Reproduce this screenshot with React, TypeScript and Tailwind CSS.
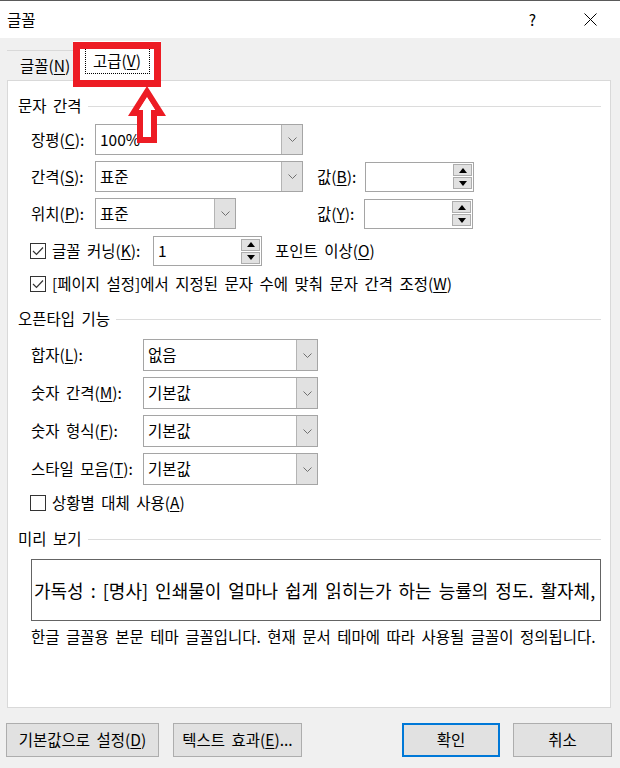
import React from "react";

const Mn = ({ k }: { k: string }) => (
  <span className="underline decoration-1 underline-offset-[2px]">{k}</span>
);

const Chevron = () => (
  <svg width="9" height="5" viewBox="0 0 9 5">
    <polyline points="0.5,0.5 4.5,4.5 8.5,0.5" fill="none" stroke="#707070" strokeWidth="1" />
  </svg>
);

const Combo = ({ value, className }: { value: string; className: string }) => (
  <div className={`flex h-full border border-[#a5a5a5] bg-white ${className}`}>
    <span className="flex flex-1 items-center pl-[4px]">{value}</span>
    <span className="flex w-[21px] items-center justify-center border-l border-[#b4b4b4] bg-[#e1e1e1]">
      <Chevron />
    </span>
  </div>
);

const Tri = ({ up }: { up?: boolean }) => (
  <svg width="8" height="5" viewBox="0 0 8 5">
    <polygon points={up ? "0,5 8,5 4,0" : "0,0 8,0 4,5"} fill="#000" />
  </svg>
);

const Spin = ({ value = "", className }: { value?: string; className: string }) => (
  <div className={`flex items-center border border-[#a5a5a5] bg-white ${className}`}>
    <span className="flex-1 pl-[4px]">{value}</span>
    <div className="mr-[1px] flex flex-col gap-[1px]">
      <span className="flex h-[12px] w-[19px] items-center justify-center border border-[#adadad] bg-[#e1e1e1]">
        <Tri up />
      </span>
      <span className="flex h-[12px] w-[19px] items-center justify-center border border-[#adadad] bg-[#e1e1e1]">
        <Tri />
      </span>
    </div>
  </div>
);

const Check = ({ on }: { on?: boolean }) => (
  <span className="flex h-[16px] w-[16px] shrink-0 items-center justify-center border border-[#333] bg-white">
    {on && (
      <svg width="12" height="10" viewBox="0 0 12 10">
        <polyline points="1,5 4.5,8.5 11,1.5" fill="none" stroke="#333" strokeWidth="1.2" />
      </svg>
    )}
  </span>
);

const Section = ({ title }: { title: string }) => (
  <div className="flex h-[20px] items-center pl-[10px] pr-[9px]">
    <span>{title}</span>
    <span className="ml-[6px] h-px flex-1 bg-[#dcdcdc]" />
  </div>
);

const Btn = ({ children, className }: { children: React.ReactNode; className: string }) => (
  <div className={`flex items-center justify-center bg-[#e1e1e1] ${className}`}>{children}</div>
);

export default function App() {
  return (
    <div className="relative h-[768px] w-[620px] overflow-hidden bg-[#f0f0f0] font-['Noto_Sans_CJK_KR',sans-serif] text-[15.5px] leading-none text-black [word-spacing:3px]">
      {/* title bar */}
      <div className="flex h-[38px] items-center border-t border-[#5a5a5a] bg-white pl-[7px]">
        <span>글꼴</span>
        <span className="ml-auto mr-[48px]">?</span>
        <svg width="13" height="13" viewBox="0 0 13 13" className="mr-[23px]">
          <path d="M0.5 0.5 L12.5 12.5 M12.5 0.5 L0.5 12.5" stroke="#000" strokeWidth="1" />
        </svg>
      </div>

      {/* tabs */}
      <div className="flex h-[42px] items-end pl-[7px]">
        <div className="flex h-[30px] w-[66px] items-center border-t border-[#d9d9d9] pl-[13px]">
          글꼴(<Mn k="N" />)
        </div>
        <div className="flex h-[39px] w-[88px] items-center justify-center bg-white">
          <div className="flex h-[26px] w-[65px] items-center justify-center border border-dotted border-black">
            고급(<Mn k="V" />)
          </div>
        </div>
      </div>

      {/* panel */}
      <div className="ml-[7px] flex h-[628px] w-[604px] flex-col border border-[#d9d9d9] bg-white">
        <div className="mt-[15px]">
          <Section title="문자 간격" />
        </div>

        <div className="mt-[8px] flex h-[31px] items-center pl-[23px]">
          <span className="w-[64px]">
            장평(<Mn k="C" />):
          </span>
          <Combo value="100%" className="w-[208px]" />
        </div>
        <div className="mt-[6px] flex h-[31px] items-center pl-[23px]">
          <span className="w-[64px]">
            간격(<Mn k="S" />):
          </span>
          <Combo value="표준" className="w-[208px]" />
          <span className="ml-[14px] w-[48px]">
            값(<Mn k="B" />):
          </span>
          <Spin className="h-[30px] w-[109px]" />
        </div>
        <div className="mt-[6px] flex h-[31px] items-center pl-[23px]">
          <span className="w-[64px]">
            위치(<Mn k="P" />):
          </span>
          <Combo value="표준" className="w-[141px]" />
          <span className="ml-[81px] w-[47px]">
            값(<Mn k="Y" />):
          </span>
          <Spin className="h-[30px] w-[109px]" />
        </div>

        <div className="mt-[7px] flex h-[30px] items-center pl-[22px]">
          <Check on />
          <span className="ml-[6px] w-[101px]">
            글꼴 커닝(<Mn k="K" />):
          </span>
          <Spin value="1" className="h-[30px] w-[109px]" />
          <span className="ml-[13px]">
            포인트 이상(<Mn k="O" />)
          </span>
        </div>
        <div className="mt-[6px] flex h-[24px] items-center pl-[22px]">
          <Check on />
          <span className="ml-[6px]">
            [페이지 설정]에서 지정된 문자 수에 맞춰 문자 간격 조정(<Mn k="W" />)
          </span>
        </div>

        <div className="mt-[13px]">
          <Section title="오픈타입 기능" />
        </div>

        {[
          ["합자", "L", "없음"],
          ["숫자 간격", "M", "기본값"],
          ["숫자 형식", "F", "기본값"],
          ["스타일 모음", "T", "기본값"],
        ].map(([label, key, value], i) => (
          <div
            key={key}
            className={`flex h-[32px] items-center pl-[23px] ${i === 0 ? "mt-[10px]" : "mt-[6px]"}`}
          >
            <span className="w-[112px]">
              {label}(<Mn k={key} />):
            </span>
            <Combo value={value} className="w-[175px]" />
          </div>
        ))}

        <div className="mt-[6px] flex h-[24px] items-center pl-[22px]">
          <Check />
          <span className="ml-[6px]">
            상황별 대체 사용(<Mn k="A" />)
          </span>
        </div>

        <div className="mt-[14px]">
          <Section title="미리 보기" />
        </div>

        <div className="ml-[23px] mt-[10px] flex h-[62px] w-[570px] items-center overflow-hidden whitespace-nowrap border border-[#646464] pl-[2px] text-[18px] [word-spacing:3px]">
          가독성 : [명사] 인쇄물이 얼마나 쉽게 읽히는가 하는 능률의 정도. 활자체, 글
        </div>
        <div className="ml-[23px] mt-[6px] flex h-[20px] items-center whitespace-nowrap">
          한글 글꼴용 본문 테마 글꼴입니다. 현재 문서 테마에 따라 사용될 글꼴이 정의됩니다.
        </div>
      </div>

      {/* buttons */}
      <div className="mt-[15px] flex h-[34px]">
        <Btn className="ml-[6px] w-[153px] border border-[#adadad]">
          기본값으로 설정(<Mn k="D" />)
        </Btn>
        <Btn className="ml-[14px] w-[129px] border border-[#adadad]">
          텍스트 효과(<Mn k="E" />)...
        </Btn>
        <Btn className="ml-[100px] w-[98px] border-2 border-[#0078d7]">확인</Btn>
        <Btn className="ml-[13px] w-[99px] border border-[#adadad]">취소</Btn>
      </div>

      {/* annotation: red highlight box and arrow */}
      <div className="pointer-events-none absolute left-[73px] top-[42px] h-[45px] w-[88px] border-[7px] border-[#ed1c24]" />
      <svg
        className="pointer-events-none absolute left-[120px] top-[80px]"
        width="54"
        height="68"
        viewBox="0 0 54 68"
      >
        <path
          fillRule="evenodd"
          fill="#ed1c24"
          d="M27 6 L46 36 L37 36 L37 63 L17 63 L17 36 L8 36 Z M27 17.2 L35.1 30 L31 30 L31 57 L23 57 L23 30 L18.9 30 Z"
        />
        <path fill="#fff" d="M27 17.2 L35.1 30 L31 30 L31 57 L23 57 L23 30 L18.9 30 Z" />
      </svg>
    </div>
  );
}
